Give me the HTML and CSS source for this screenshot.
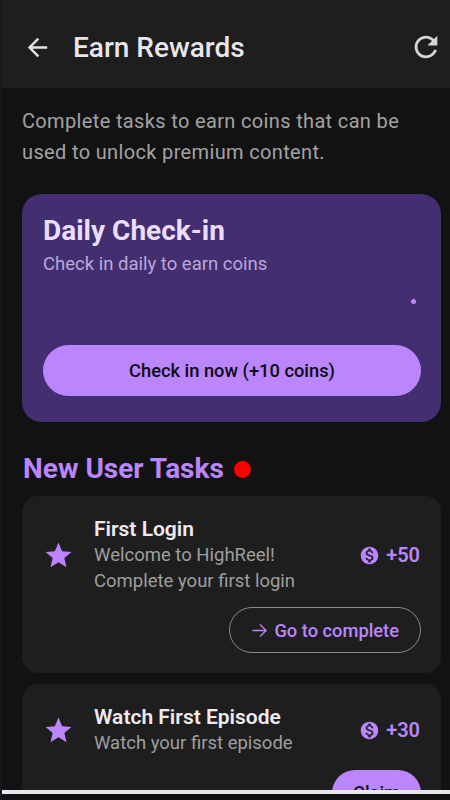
FILE: index.html
```html
<!DOCTYPE html>
<html lang="en">
<head>
    <meta charset="UTF-8">
    <meta name="viewport" content="width=device-width, initial-scale=1.0">
    <title>Earn Rewards</title>
    <link rel="stylesheet" href="styles.css">
</head>
<body>
    <div class="screen">
        <div class="app-bar">
            <svg class="back-icon" viewBox="0 0 24 24"><path d="M20 11H7.83l5.59-5.59L12 4l-8 8 8 8 1.41-1.41L7.83 13H20z"/></svg>
            <h1>Earn Rewards</h1>
            <svg class="refresh-icon" viewBox="0 0 24 24"><path d="M17.65 6.35C16.2 4.9 14.21 4 12 4c-4.42 0-7.99 3.58-7.99 8s3.57 8 7.99 8c3.73 0 6.84-2.55 7.73-6h-2.08c-.82 2.33-3.04 4-5.65 4-3.31 0-6-2.69-6-6s2.69-6 6-6c1.66 0 3.14.69 4.22 1.78L13 11h7V4z"/></svg>
        </div>

        <div class="content">
            <p class="intro">Complete tasks to earn coins that can be used to unlock premium content.</p>

            <div class="checkin-card">
                <h2>Daily Check-in</h2>
                <p>Check in daily to earn coins</p>
                <div class="dots"><span class="dot"></span></div>
                <button class="checkin-btn">Check in now (+10 coins)</button>
            </div>

            <div class="section-title">
                <h2>New User Tasks</h2>
                <span class="red-dot"></span>
            </div>

            <div class="task-card">
                <div class="task-row">
                    <svg class="star" viewBox="0 0 24 24"><path d="M12 17.27 18.18 21l-1.64-7.03L22 9.24l-7.19-.61L12 2 9.19 8.63 2 9.24l5.46 4.73L5.82 21z"/></svg>
                    <div class="task-text">
                        <h3>First Login</h3>
                        <p>Welcome to HighReel!<br>Complete your first login</p>
                    </div>
                    <div class="reward">
                        <svg class="coin" viewBox="0 0 24 24"><path d="M12 2C6.48 2 2 6.48 2 12s4.48 10 10 10 10-4.48 10-10S17.52 2 12 2zm1.41 16.09V20h-2.67v-1.93c-1.71-.36-3.16-1.46-3.27-3.4h1.96c.1 1.05.82 1.87 2.65 1.87 1.96 0 2.4-.98 2.4-1.59 0-.83-.44-1.61-2.67-2.14-2.48-.6-4.18-1.62-4.18-3.67 0-1.72 1.39-2.84 3.11-3.21V4h2.67v1.95c1.86.45 2.79 1.86 2.85 3.39H14.3c-.05-1.11-.64-1.87-2.22-1.87-1.5 0-2.4.68-2.4 1.64 0 .84.65 1.39 2.67 1.91s4.18 1.39 4.18 3.91c-.01 1.83-1.38 2.83-3.12 3.16z"/></svg>
                        <span>+50</span>
                    </div>
                </div>
                <div class="task-action">
                    <button class="outline-btn">
                        <svg viewBox="0 0 24 24"><path d="M4 12h15.5M12.5 5l7 7-7 7"/></svg>
                        Go to complete
                    </button>
                </div>
            </div>

            <div class="task-card">
                <div class="task-row">
                    <svg class="star" viewBox="0 0 24 24"><path d="M12 17.27 18.18 21l-1.64-7.03L22 9.24l-7.19-.61L12 2 9.19 8.63 2 9.24l5.46 4.73L5.82 21z"/></svg>
                    <div class="task-text">
                        <h3>Watch First Episode</h3>
                        <p>Watch your first episode</p>
                    </div>
                    <div class="reward">
                        <svg class="coin" viewBox="0 0 24 24"><path d="M12 2C6.48 2 2 6.48 2 12s4.48 10 10 10 10-4.48 10-10S17.52 2 12 2zm1.41 16.09V20h-2.67v-1.93c-1.71-.36-3.16-1.46-3.27-3.4h1.96c.1 1.05.82 1.87 2.65 1.87 1.96 0 2.4-.98 2.4-1.59 0-.83-.44-1.61-2.67-2.14-2.48-.6-4.18-1.62-4.18-3.67 0-1.72 1.39-2.84 3.11-3.21V4h2.67v1.95c1.86.45 2.79 1.86 2.85 3.39H14.3c-.05-1.11-.64-1.87-2.22-1.87-1.5 0-2.4.68-2.4 1.64 0 .84.65 1.39 2.67 1.91s4.18 1.39 4.18 3.91c-.01 1.83-1.38 2.83-3.12 3.16z"/></svg>
                        <span>+30</span>
                    </div>
                </div>
                <div class="task-action">
                    <button class="claim-btn">Claim</button>
                </div>
            </div>
        </div>

        <div class="bottom-edge"></div>
    </div>
</body>
</html>
```

FILE: styles.css
```css
* {
    margin: 0;
    padding: 0;
    box-sizing: border-box;
}

html, body {
    height: 100%;
    overflow: hidden;
}

body {
    font-family: Roboto, 'Noto Sans', sans-serif;
    background: #121212;
    color: #e6e0e9;
}

.screen {
    position: relative;
    height: 800px;
    overflow: hidden;
    border-left: 2px solid #12181c;
    background: #121212;
}

.app-bar {
    display: flex;
    align-items: center;
    height: 88px;
    padding: 6px 7px 0 21px;
    background: #1e1e1e;
}

.app-bar h1 {
    flex: 1;
    font-size: 28px;
    font-weight: 500;
    color: #e9e5ec;
    margin-left: 21px;
}

.back-icon {
    width: 29px;
    height: 29px;
    fill: #e6e0e9;
}

.refresh-icon {
    width: 34px;
    height: 34px;
    fill: #d6d2da;
}

.content {
    padding: 18px 9px 0 20px;
}

.intro {
    font-size: 20px;
    line-height: 31px;
    color: #a3a3a3;
    letter-spacing: 0.35px;
}

.checkin-card {
    margin-top: 26px;
    height: 228px;
    padding: 20px 20px 0 21px;
    background: #432f70;
    border-radius: 20px;
}

.checkin-card h2 {
    font-size: 28px;
    font-weight: 700;
    line-height: 34px;
    color: #eaddff;
}

.checkin-card p {
    margin-top: 4px;
    font-size: 18.5px;
    line-height: 24px;
    color: #bba7dc;
}

.dots {
    display: flex;
    justify-content: flex-end;
    height: 69px;
    padding: 23px 5px 0 0;
}

.dot {
    width: 5px;
    height: 5px;
    border-radius: 50%;
    background: #bb86fc;
}

.checkin-btn {
    display: block;
    width: 100%;
    height: 51px;
    border: none;
    border-radius: 26px;
    background: #bb86fc;
    color: #0d0a12;
    font-family: inherit;
    font-size: 18.3px;
    font-weight: 500;
}

.section-title {
    display: flex;
    align-items: center;
    gap: 10px;
    margin-top: 30px;
    padding-left: 1px;
}

.section-title h2 {
    font-size: 28px;
    font-weight: 700;
    line-height: 34px;
    color: #bb86fc;
}

.red-dot {
    width: 17px;
    height: 17px;
    border-radius: 50%;
    background: #ff0000;
}

.task-card {
    margin-top: 11px;
    padding: 20px 20px 20px 21px;
    background: #1e1e1e;
    border-radius: 16px;
}

.section-title + .task-card {
    margin-top: 10px;
}

.task-row {
    display: flex;
    align-items: center;
}

.star {
    width: 31px;
    height: 31px;
    fill: #bb86fc;
    flex-shrink: 0;
}

.task-text {
    flex: 1;
    margin-left: 20px;
}

.task-text h3 {
    font-size: 21px;
    font-weight: 600;
    line-height: 26px;
    margin-bottom: 1px;
    color: #eeeaf0;
}

.task-text p {
    font-size: 18.5px;
    line-height: 25.5px;
    color: #9e9e9e;
}

.reward {
    display: flex;
    align-items: center;
    gap: 6px;
    margin-right: 1px;
    font-size: 20px;
    font-weight: 600;
    color: #bb86fc;
}

.coin {
    width: 21px;
    height: 21px;
    fill: #bb86fc;
}

.task-action {
    display: flex;
    justify-content: flex-end;
    margin-top: 13px;
}

.outline-btn {
    display: flex;
    align-items: center;
    gap: 4px;
    height: 46px;
    padding: 0 21px 0 19px;
    background: transparent;
    border: 1px solid #8a8a8a;
    border-radius: 23px;
    color: #bb86fc;
    font-family: inherit;
    font-size: 18.3px;
    font-weight: 500;
}

.outline-btn svg {
    width: 21px;
    height: 21px;
    fill: none;
    stroke: #bb86fc;
    stroke-width: 1.6;
}

.claim-btn {
    height: 46px;
    padding: 0 21px;
    border: none;
    border-radius: 23px;
    background: #bb86fc;
    color: #121212;
    font-family: inherit;
    font-size: 18.3px;
    font-weight: 500;
}

.bottom-edge {
    position: absolute;
    left: -2px;
    right: 0;
    bottom: 0;
    height: 10px;
    background: #121212;
    border-top: 4px solid #e8e8f0;
}
```
